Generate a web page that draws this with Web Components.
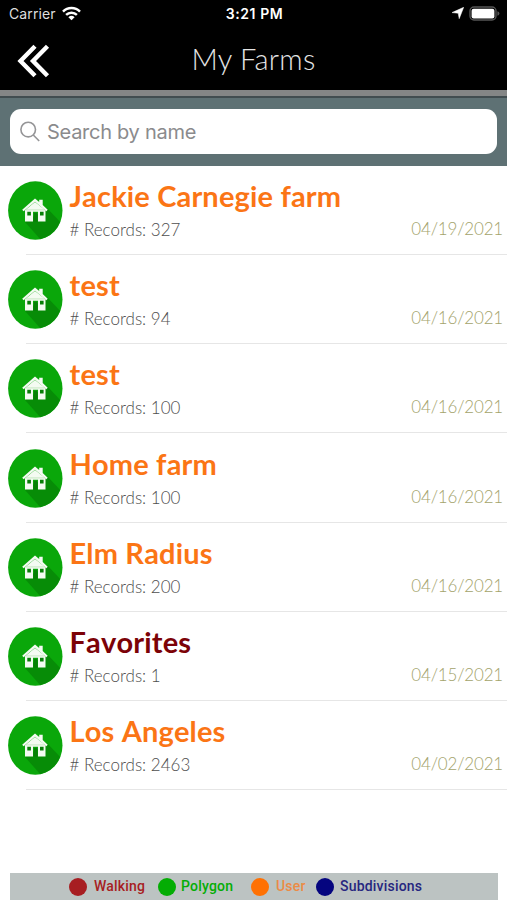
<!DOCTYPE html>
<html lang="en">
<head>
<meta charset="utf-8">
<title>My Farms</title>
<style>
  body {
    margin: 0;
    background: #fff;
    font-family: Lato, sans-serif;
  }
</style>
</head>
<body>
<farm-app></farm-app>

<script>
/**
 * Creates a template from a string of markup.
 */
const html = (markup) => {
  const template = document.createElement('template')
  template.innerHTML = markup
  return template
}

/**
 * Base for all elements, clones the template into an open shadow root.
 */
class BaseElement extends HTMLElement {
  constructor () {
    super()

    this.attachShadow({ mode: 'open' })
      .appendChild(this.constructor.template.content.cloneNode(true))
  }
}

customElements.define('status-bar',
  class extends BaseElement {
    static template = html(`
<style>
  :host {
    display: grid;
    grid-template-columns: 1fr auto 1fr;
    align-items: center;
    box-sizing: border-box;
    height: 28px;
    padding: 0 7px 2px 9px;
    color: #fff;
    font-family: Inter, sans-serif;
    font-size: 14px;
  }

  .side {
    display: flex;
    align-items: center;
    gap: 6px;
  }

  .carrier {
    color: #dedede;
    letter-spacing: 0.1px;
  }

  .end {
    justify-content: flex-end;
    gap: 5px;
  }

  .time {
    font-size: 14px;
    font-weight: 600;
    letter-spacing: 0.6px;
  }

  svg {
    display: block;
  }
</style>

<div class="side">
  <span class="carrier">Carrier</span>
  <svg width="19" height="15" viewBox="0 0 19 15" fill="none" stroke="#fff" stroke-width="2.5">
    <path d="M1 5.6a12 12 0 0 1 17 0M4.1 8.9a7.7 7.7 0 0 1 10.8 0"/>
    <path d="M9.5 14.2 6.4 11.2a4.5 4.5 0 0 1 6.2 0z" fill="#fff" stroke="none"/>
  </svg>
</div>
<span class="time">3:21 PM</span>
<div class="side end">
  <svg width="12" height="12" viewBox="0 0 12 12"><path d="M11.7.3 7.2 11.7 6.2 6.2 0 5.6z" fill="#fff" stroke="#fff" stroke-width=".5"/></svg>
  <svg width="31" height="15" viewBox="0 0 31 15">
    <rect x="1" y="1" width="26" height="13" rx="4" fill="none" stroke="#555" stroke-width="1.4"/>
    <rect x="2.6" y="2.8" width="22.8" height="9.6" rx="2" fill="#fff"/>
    <path d="M28.4 5.2q2 .6 2 2.3t-2 2.3z" fill="#555"/>
  </svg>
</div>
`)
  }
)

customElements.define('title-bar',
  class extends BaseElement {
    static template = html(`
<style>
  :host {
    display: grid;
    grid-template-columns: 1fr auto 1fr;
    align-items: center;
    height: 62px;
    color: #fff;
  }

  svg {
    display: block;
    margin: 4px 0 0 16px;
  }

  h1 {
    margin: 0;
    font-size: 29px;
    font-weight: 300;
    line-height: 62px;
    letter-spacing: 0.3px;
    color: #e4e4e4;
  }
</style>

<svg width="34" height="34" viewBox="0 0 34 34" fill="none" stroke="#fff" stroke-width="4.4">
  <path d="M19 2.2 4.5 17 19 31.8M31.5 2.2 17 17 31.5 31.8"/>
</svg>
<h1><slot></slot></h1>
`)
  }
)

customElements.define('search-field',
  class extends BaseElement {
    static template = html(`
<style>
  :host {
    display: block;
    box-sizing: border-box;
    height: 76px;
    padding: 11px 10px 12px;
    border-top: 6px solid #848686;
    background: #5e7174;
    box-shadow: inset 0 2px #414d50;
  }

  .box {
    display: flex;
    align-items: center;
    gap: 7px;
    box-sizing: border-box;
    height: 45px;
    margin-top: 2px;
    padding-left: 10px;
    border-radius: 11px;
    background: #fff;
    color: #8b8b8d;
    font-family: Inter, sans-serif;
    font-size: 20px;
    letter-spacing: -0.28px;
  }
</style>

<div class="box">
  <svg width="20" height="21" viewBox="0 0 20 21" fill="none" stroke="#959597" stroke-width="1.6">
    <circle cx="8.2" cy="8.6" r="7.3"/>
    <path d="M13.3 14 19.2 20"/>
  </svg>
  <span><slot></slot></span>
</div>
`)
  }
)

customElements.define('farm-icon',
  class extends BaseElement {
    static template = html(`
<style>
  :host,
  svg {
    display: block;
  }
</style>

<svg width="56" height="60" viewBox="0 0 56 60">
  <clipPath id="disc"><ellipse cx="28.3" cy="30.5" rx="27" ry="29"/></clipPath>
  <ellipse cx="28.3" cy="30.5" rx="27.2" ry="29.2" fill="#0aa70a"/>
  <path d="M40 28 56 45V60H34L18 42z" fill="#078c07" clip-path="url(#disc)"/>
  <g transform="translate(0 .6)">
    <g fill="#f4fbf2">
      <path d="M15.2 29.2 28 18l4.2 3.5V19.2h3.5v5.3l5 4.6-1.4 1.6L28 21.2 16.6 30.7z"/>
      <path d="M18 29.6 28 21.5 38.5 29.6V41H31V31.2H26V41H18z"/>
      <path d="M26.9 32.2H30V41h-3.1z" fill="#077f07"/>
    </g>
    <path d="M20.3 31.2h3.6v3.8h-3.6zM33 31.2h3.6v3.8H33z" fill="#087f08"/>
    <path d="M18.5 29.3H38" stroke="#b3deb1" stroke-width=".7"/>
  </g>
</svg>
`)
  }
)

customElements.define('farm-row',
  /**
   * Represents one farm, the name goes in the slot.
   */
  class extends BaseElement {
    static template = html(`
<style>
  :host {
    display: grid;
    grid-template-columns: 56px 1fr auto;
    column-gap: 6.5px;
    box-sizing: border-box;
    height: 89.2px;
    padding: 14px 4px 0 7px;
    background: linear-gradient(#e6e6e6, #e6e6e6) 26px 100% / 100% 1.2px no-repeat;
  }

  h2 {
    margin: -1px 0 0;
    color: var(--farm-color, #fb7515);
    font-size: 29px;
    font-weight: 700;
    font-kerning: none;
    letter-spacing: 0.16px;
    line-height: 34px;
  }

  p {
    margin: 0;
    padding-top: 2px;
    color: #4e4e4e;
    font-size: 17px;
    font-weight: 300;
    line-height: 30px;
  }

  time {
    align-self: start;
    padding-top: 34px;
    color: #a3a36b;
    font-size: 17px;
    font-weight: 300;
    letter-spacing: -0.2px;
    line-height: 30px;
  }
</style>

<farm-icon></farm-icon>
<div>
  <h2><slot></slot></h2>
  <p># Records: <span id="records"></span></p>
</div>
<time></time>
`)

    /**
     * Called when the element is inserted into the DOM.
     */
    connectedCallback () {
      this.shadowRoot.querySelector('#records').textContent = this.getAttribute('records')
      this.shadowRoot.querySelector('time').textContent = this.getAttribute('date')
    }
  }
)

customElements.define('legend-item',
  class extends BaseElement {
    static template = html(`
<style>
  :host {
    display: flex;
    align-items: center;
    color: var(--text, var(--dot));
  }

  i {
    width: 18px;
    height: 18px;
    margin-right: var(--gap, 6px);
    border-radius: 50%;
    background: var(--dot);
  }

  span {
    margin-bottom: 1px;
  }
</style>

<i></i><span><slot></slot></span>
`)
  }
)

customElements.define('farm-legend',
  class extends BaseElement {
    static template = html(`
<style>
  :host {
    display: flex;
    box-sizing: border-box;
    height: 27px;
    margin: 0 9px 0 10px;
    padding-left: 59px;
    background: #bcc3c2;
    font-family: Roboto, sans-serif;
    font-size: 14px;
    font-weight: 500;
    letter-spacing: 0.2px;
  }
</style>

<slot></slot>
`)
  }
)

customElements.define('farm-app',
  class extends BaseElement {
    static template = html(`
<style>
  :host {
    display: flex;
    flex-direction: column;
    height: 900px;
    overflow: hidden;
  }

  header {
    background: #000;
  }

  main {
    flex: 1;
  }

  .favorites {
    --farm-color: #7c0207;
  }

  .walking {
    --dot: #a71e22;
    --gap: 7px;
    width: 89px;
  }

  .polygon {
    --dot: #04ad04;
    --gap: 5px;
    width: 93px;
  }

  .user {
    --dot: #ff7103;
    --text: #ec8b45;
    --gap: 7px;
    width: 65px;
  }

  .subdivisions {
    --dot: #05057f;
    --text: #26267f;
    --gap: 6px;
  }
</style>

<header>
  <status-bar></status-bar>
  <title-bar>My Farms</title-bar>
</header>
<search-field>Search by name</search-field>
<main>
  <farm-row records="327" date="04/19/2021">Jackie Carnegie farm</farm-row>
  <farm-row records="94" date="04/16/2021">test</farm-row>
  <farm-row records="100" date="04/16/2021">test</farm-row>
  <farm-row records="100" date="04/16/2021">Home farm</farm-row>
  <farm-row records="200" date="04/16/2021">Elm Radius</farm-row>
  <farm-row class="favorites" records="1" date="04/15/2021">Favorites</farm-row>
  <farm-row records="2463" date="04/02/2021">Los Angeles</farm-row>
</main>
<farm-legend>
  <legend-item class="walking">Walking</legend-item>
  <legend-item class="polygon">Polygon</legend-item>
  <legend-item class="user">User</legend-item>
  <legend-item class="subdivisions">Subdivisions</legend-item>
</farm-legend>
`)
  }
)
</script>
</body>
</html>
